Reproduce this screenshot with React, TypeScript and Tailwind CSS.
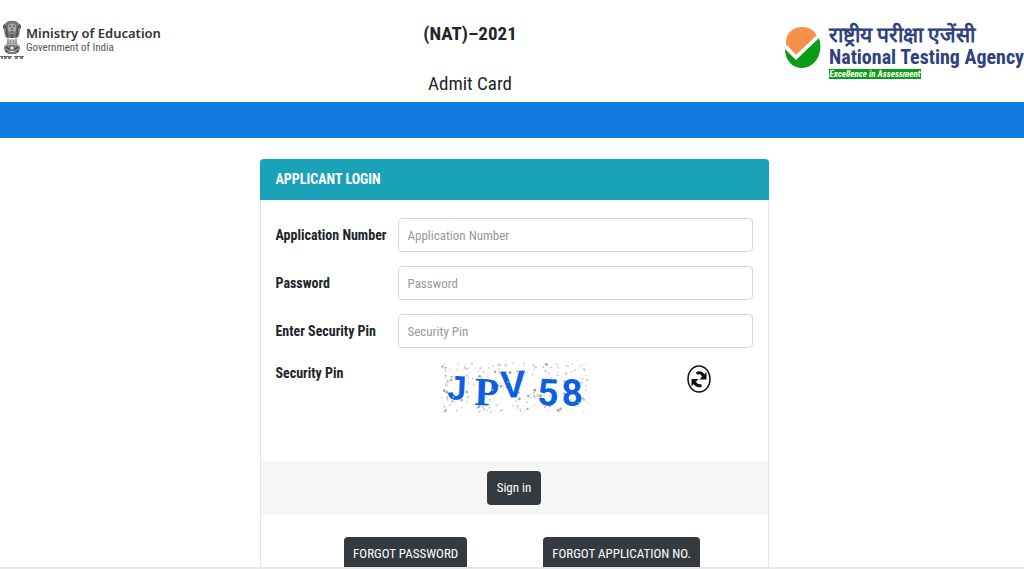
import { useState } from "react";

// Small linear generator so the captcha background stays the same on every render
const makeNoise = (count: number) => {
  let seed = 17;
  const next = () => {
    seed = (seed * 9301 + 49297) % 233280;
    return seed / 233280;
  };
  return Array.from({ length: count }, () => ({
    x: 2 + next() * 149,
    y: 1 + next() * 50,
    r: 0.6 + next() * 0.9,
    tone: next(),
  }));
};

const noise = makeNoise(170);

const letters = [
  { char: "J", x: 9, y: 37, rotate: 3, size: 34, family: "Liberation Sans" },
  { char: "P", x: 36, y: 43, rotate: 2, size: 40, family: "Liberation Serif" },
  { char: "V", x: 63, y: 36, rotate: -3, size: 38, family: "Liberation Sans" },
  { char: "5", x: 99, y: 43, rotate: 2, size: 37, family: "Roboto" },
  { char: "8", x: 124, y: 44, rotate: -2, size: 37, family: "Roboto" },
];

const fields = [
  { id: "application-number", label: "Application Number", placeholder: "Application Number", type: "text" },
  { id: "password", label: "Password", placeholder: "Password", type: "password" },
  { id: "security-pin", label: "Enter Security Pin", placeholder: "Security Pin", type: "text" },
];

function Emblem() {
  return (
    <svg viewBox="0 0 24 40" className="h-10 w-6 shrink-0" aria-hidden="true">
      {/* lions */}
      <path d="M6 3 Q8 0 12 1 Q16 0 18 3 L20 4 Q22 7 20 10 L19 16 Q17 19 15 18 L9 18 Q6 19 5 16 L4 10 Q2 7 4 4Z" fill="#777" />
      <path d="M8 5 Q12 2 16 5 L16 10 Q14 14 12 14 Q10 14 8 10Z" fill="#aaa" />
      <path d="M9 6h2M13 6h2M11 9h2M10 12h4M5 6l2 2M19 6l-2 2M6 12l2 4M18 12l-2 4M12 14v4" stroke="#333" strokeWidth="1" fill="none" />
      <path d="M4 5v3M20 5v3M7 9v3M17 9v3" stroke="#444" strokeWidth="1" />
      {/* abacus and lotus base */}
      <path d="M7 19h10v5H7z" fill="#ccc" />
      <path d="M8 19v5M10 20l1 3M13 20l1 3M16 19v5M6 24h12" stroke="#777" strokeWidth="1" />
      <rect x="4" y="25" width="16" height="6" rx="2" fill="#888" />
      <circle cx="12" cy="28" r="2.4" fill="#ddd" stroke="#333" strokeWidth="0.8" />
      <path d="M6 27l3 2M18 27l-3 2M5 31q7 3 14 0" stroke="#333" strokeWidth="1.2" fill="none" />
      <path d="M6 32h12l-2 2H8z" fill="#777" />
      {/* motto line */}
      <path d="M0 36.500h12M14 36.500h10" stroke="#444" strokeWidth="0.8" />
      <path d="M1 38h2M4 38h3M8 38h3M15 38h3M20 38h3" stroke="#555" strokeWidth="1.600" />
    </svg>
  );
}

function AgencyMark() {
  return (
    <svg viewBox="0 0 37 43" className="h-[43px] w-[37px] shrink-0" aria-hidden="true">
      <path d="M3 22C-1 9 8 1 18 1c7 0 12 3 15 9L12 29Z" fill="#f5914a" />
      <path d="M1 23l2-1 9 11L35 12c5 15-4 30-17 30C9 42 1 35 1 23Z" fill="#0c9b17" />
      <path d="M3 19l9 10L34 8l2 3-24 23L1 23Z" fill="#fff" />
    </svg>
  );
}

function Captcha() {
  return (
    <svg viewBox="0 0 153 53" className="h-[53px] w-[153px] shrink-0" role="img" aria-label="Security pin">
      {noise.map((dot, idx) => (
        <circle key={idx} cx={dot.x} cy={dot.y} r={dot.r} fill={dot.tone > 0.6 ? "#a9a49e" : "#d6d4d8"} />
      ))}
      {letters.map((l) => (
        <text
          key={l.char}
          x={l.x}
          y={l.y}
          fontSize={l.size}
          fontFamily={l.family}
          fontWeight={700}
          fill="#0c5fe0"
          transform={`rotate(${l.rotate} ${l.x} ${l.y})`}
        >
          {l.char}
        </text>
      ))}
      {/* light specks over the letters */}
      {noise.slice(0, 60).map((dot, idx) => (
        <circle key={idx} cx={dot.y * 3} cy={dot.x / 3} r={0.8} fill="#c9d6ec" />
      ))}
    </svg>
  );
}

export default function App() {
  const [values, setValues] = useState<Record<string, string>>({});

  return (
    <div className="flex h-screen flex-col overflow-hidden border-b-2 border-[#e9e9ea] bg-white font-['Roboto_Condensed','Roboto',sans-serif] text-[#212529]">
      {/* Header */}
      <header className="flex h-[102px] shrink-0 items-start justify-between">
        <div className="flex w-[156px] gap-[2px] pt-5">
          <Emblem />
          <div className="pt-1 whitespace-nowrap">
            <p className="font-['Noto_Sans',sans-serif] text-[13px] leading-[18px] font-semibold text-[#333]">
              Ministry of Education
            </p>
            <p className="text-[11px] leading-3 text-[#555]">Government of India</p>
          </div>
        </div>

        <div className="flex flex-col items-center gap-6 pt-5">
          <h1 className="text-[19px] leading-7 font-bold">(NAT)–2021</h1>
          <h2 className="text-[19px] leading-6">Admit Card</h2>
        </div>

        <div className="flex items-start gap-2 pt-6">
          <div className="pt-[2px]">
            <AgencyMark />
          </div>
          <div className="font-bold whitespace-nowrap text-[#2f4180]">
            <p lang="hi" className="text-[21px] leading-[22px]">राष्ट्रीय परीक्षा एजेंसी</p>
            <p className="text-[20px] leading-[23px]">National Testing Agency</p>
            <p className="w-[92px] bg-[#0c9b17] text-center text-[9px] leading-[10px] text-white italic">
              Excellence in Assessment
            </p>
          </div>
        </div>
      </header>

      <div className="h-9 shrink-0 bg-[#0f79e0]" />

      {/* Login card */}
      <main className="flex justify-center pt-[21px] pl-1">
        <div className="w-[509px] max-w-full shrink-0 rounded border border-[#e3e5e7]">
          <div className="-mx-px -mt-px rounded-t bg-[#19a2b8] px-4 py-[9px]">
            <h3 className="text-[14px] leading-[23px] font-bold text-white">APPLICANT LOGIN</h3>
          </div>

          <form onSubmit={(e) => e.preventDefault()}>
            <div className="flex flex-col gap-[14px] px-[15px] pt-[18px]">
              {fields.map((field) => (
                <div key={field.id} className="flex items-center">
                  <label htmlFor={field.id} className="w-[122px] shrink-0 text-[14px] font-bold whitespace-nowrap">
                    {field.label}
                  </label>
                  <input
                    id={field.id}
                    type={field.type}
                    placeholder={field.placeholder}
                    value={values[field.id] ?? ""}
                    onChange={(e) => setValues({ ...values, [field.id]: e.target.value })}
                    className="h-[34px] min-w-0 flex-1 rounded border border-[#d3d7db] px-[9px] text-[13px] placeholder:text-[#94999e]"
                  />
                </div>
              ))}

              <div className="flex h-[99px] items-start">
                <p className="w-[162px] text-[14px] leading-[22px] font-bold">Security Pin</p>
                <Captcha />
                <button type="button" aria-label="Refresh security pin" className="mt-[3px] ml-24">
                  <svg viewBox="0 0 24 28" className="h-7 w-6" fill="none">
                    <ellipse cx="12" cy="14" rx="11" ry="13" stroke="#111" strokeWidth="1.500" />
                    <path d="M9.500 8.500c4-2 6 0 7 3" stroke="#111" strokeWidth="3" />
                    <path d="M19.500 7v7.500h-7z" fill="#111" />
                    <path d="M14.500 20.500c-4 1-6-1-7-3" stroke="#111" strokeWidth="3" />
                    <path d="M4.500 21.500V14h7z" fill="#111" />
                  </svg>
                </button>
              </div>
            </div>

            <div className="flex justify-center bg-[#f6f6f7] py-[10px]">
              <button type="submit" className="h-[34px] rounded bg-[#343a40] px-[10px] text-[13px] text-white">
                Sign in
              </button>
            </div>
          </form>

          <div className="flex justify-center gap-[76px] pt-[22px] pl-4">
            <button type="button" className="h-[34px] rounded bg-[#343a40] px-[9px] text-[13px] whitespace-nowrap text-white">
              FORGOT PASSWORD
            </button>
            <button type="button" className="h-[34px] rounded bg-[#343a40] px-[9px] text-[13px] whitespace-nowrap text-white">
              FORGOT APPLICATION NO.
            </button>
          </div>
        </div>
      </main>
    </div>
  );
}
